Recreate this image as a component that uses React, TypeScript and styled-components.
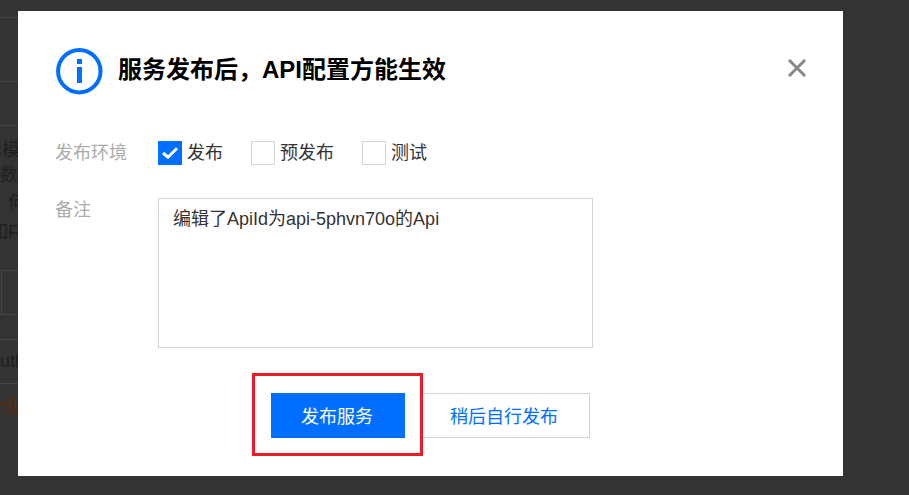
import React from 'react';
import styled, { createGlobalStyle } from 'styled-components';

const GlobalStyle = createGlobalStyle`
  html, body {
    margin: 0;
    padding: 0;
    background: #333333;
  }
  body {
    font-family: "Liberation Sans", "Noto Sans CJK SC", sans-serif;
  }
`;

const Page = styled.div`
  width: 909px;
  height: 495px;
  display: flex;
  overflow: hidden;
  background: #333333;
`;

/* the dimmed page that still shows left of the dialog */
const Behind = styled.div`
  width: 18px;
  flex: none;
  display: flex;
  flex-direction: column;
  overflow: hidden;
`;

const BehindRow = styled.div<{ $h: number; $line?: boolean; $color?: string }>`
  height: ${(p) => p.$h}px;
  flex: none;
  display: flex;
  justify-content: flex-start;
  align-items: center;
  white-space: nowrap;
  font-size: 18px;
  color: ${(p) => p.$color || '#1f1f1f'};
  border-bottom: ${(p) => (p.$line ? '1px solid #454545' : 'none')};
  box-sizing: border-box;
`;

const BehindText = styled.span<{ $shift: number }>`
  flex: none;
  margin-left: ${(p) => p.$shift}px;
`;

const BehindCell = styled.div`
  height: 100%;
  width: 17px;
  margin-left: 1px;
  flex: none;
  box-sizing: border-box;
  border: 1px solid #454545;
  border-right: none;
  border-bottom: none;
`;

const Main = styled.div`
  flex: none;
  padding-top: 11px;
`;

const Modal = styled.div`
  width: 825px;
  height: 465px;
  box-sizing: border-box;
  background: #ffffff;
  padding: 37px 37px 0;
  display: flex;
  flex-direction: column;
`;

const Header = styled.div`
  display: flex;
  align-items: center;
  height: 44px;
`;

const IconWrap = styled.div`
  flex: none;
  width: 47px;
  height: 47px;
  margin: 2px 0 0 1px;
`;

const Title = styled.h2`
  margin: 0 0 0 15px;
  flex: 1;
  font-size: 24px;
  line-height: 44px;
  font-weight: 700;
  color: #000000;
`;

const CloseButton = styled.button`
  border: none;
  background: none;
  padding: 0;
  width: 20px;
  height: 20px;
  margin: -4px -1px 0 0;
  display: flex;
`;

const FormRow = styled.div<{ $top: number }>`
  display: flex;
  margin-top: ${(p) => p.$top}px;
`;

const Label = styled.div`
  width: 103px;
  flex: none;
  font-size: 18px;
  line-height: 24px;
  color: #ababab;
`;

const Options = styled.div`
  display: flex;
  gap: 28px;
`;

const Option = styled.label`
  display: flex;
  align-items: center;
  gap: 5px;
  font-size: 18px;
  line-height: 24px;
  color: #333333;
`;

const Box = styled.span<{ $checked?: boolean }>`
  width: 24px;
  height: 24px;
  box-sizing: border-box;
  display: flex;
  align-items: center;
  justify-content: center;
  background: ${(p) => (p.$checked ? '#006eff' : '#ffffff')};
  border: ${(p) => (p.$checked ? 'none' : '1px solid #cfd5de')};
`;

const Note = styled.textarea`
  width: 435px;
  height: 150px;
  box-sizing: border-box;
  margin: 0;
  padding: 7px 14px;
  border: 1px solid #cfd5de;
  border-radius: 0;
  outline: none;
  resize: none;
  font-family: "Liberation Sans", "Noto Sans CJK SC", sans-serif;
  font-size: 18px;
  line-height: 27px;
  color: #333333;
`;

const Footer = styled.div`
  display: flex;
  align-items: stretch;
  margin: 25px 0 0 197px;
`;

const Highlight = styled.div`
  border: 3px solid #ed1c24;
  padding: 17px 15px 15px 16px;
  display: flex;
`;

const PrimaryButton = styled.button`
  width: 134px;
  height: 45px;
  border: none;
  padding: 0 2px 2px 0;
  background: #006eff;
  color: #ffffff;
  font-family: inherit;
  font-size: 18px;
`;

const SecondaryButton = styled.button`
  width: 167px;
  height: 45px;
  margin-top: 20px;
  box-sizing: border-box;
  border: 1px solid #cfd5de;
  border-left: none;
  padding: 0 4px 2px 0;
  background: #ffffff;
  color: #006eff;
  font-family: inherit;
  font-size: 18px;
`;

const InfoIcon = () => (
  <svg width="47" height="47" viewBox="0 0 47 47" fill="none">
    <circle cx="23.3" cy="23.2" r="21.2" stroke="#006eff" strokeWidth="4" />
    <rect x="21" y="11" width="5" height="5" fill="#006eff" />
    <rect x="21" y="19" width="5" height="16" fill="#006eff" />
  </svg>
);

const CloseIcon = () => (
  <svg width="20" height="20" viewBox="0 0 20 20" fill="none">
    <path d="M2 2 L18 18 M18 2 L2 18" stroke="#888888" strokeWidth="3" />
  </svg>
);

const CheckIcon = () => (
  <svg width="16" height="12" viewBox="0 0 16 12" fill="none">
    <path d="M1 6 L6 10.2 L15 1.2" stroke="#ffffff" strokeWidth="3" />
  </svg>
);

export default function App() {
  return (
    <>
      <GlobalStyle />
      <Page>
        <Behind>
          <BehindRow $h={18} $line />
          <BehindRow $h={64} $line />
          <BehindRow $h={44} $line />
          <BehindRow $h={10} />
          <BehindRow $h={24}><BehindText $shift={-16}>标模板</BehindText></BehindRow>
          <BehindRow $h={26}><BehindText $shift={0}>数字</BehindText></BehindRow>
          <BehindRow $h={30}><BehindText $shift={8}>何</BehindText></BehindRow>
          <BehindRow $h={28}><BehindText $shift={-10}>如F</BehindText></BehindRow>
          <BehindRow $h={26} />
          <BehindRow $h={45} $line>
            <BehindCell />
          </BehindRow>
          <BehindRow $h={25} $line />
          <BehindRow $h={44} $line><BehindText $shift={-12}>Auth</BehindText></BehindRow>
          <BehindRow $h={42} $color="#5a2d10"><BehindText $shift={-13}>全级</BehindText></BehindRow>
        </Behind>
        <Main>
          <Modal>
            <Header>
              <IconWrap>
                <InfoIcon />
              </IconWrap>
              <Title>服务发布后，API配置方能生效</Title>
              <CloseButton>
                <CloseIcon />
              </CloseButton>
            </Header>
            <FormRow $top={49}>
              <Label>发布环境</Label>
              <Options>
                <Option>
                  <Box $checked>
                    <CheckIcon />
                  </Box>
                  发布
                </Option>
                <Option>
                  <Box />
                  预发布
                </Option>
                <Option>
                  <Box />
                  测试
                </Option>
              </Options>
            </FormRow>
            <FormRow $top={33}>
              <Label>备注</Label>
              <Note readOnly defaultValue="编辑了ApiId为api-5phvn70o的Api" />
            </FormRow>
            <Footer>
              <Highlight>
                <PrimaryButton>发布服务</PrimaryButton>
              </Highlight>
              <SecondaryButton>稍后自行发布</SecondaryButton>
            </Footer>
          </Modal>
        </Main>
      </Page>
    </>
  );
}
